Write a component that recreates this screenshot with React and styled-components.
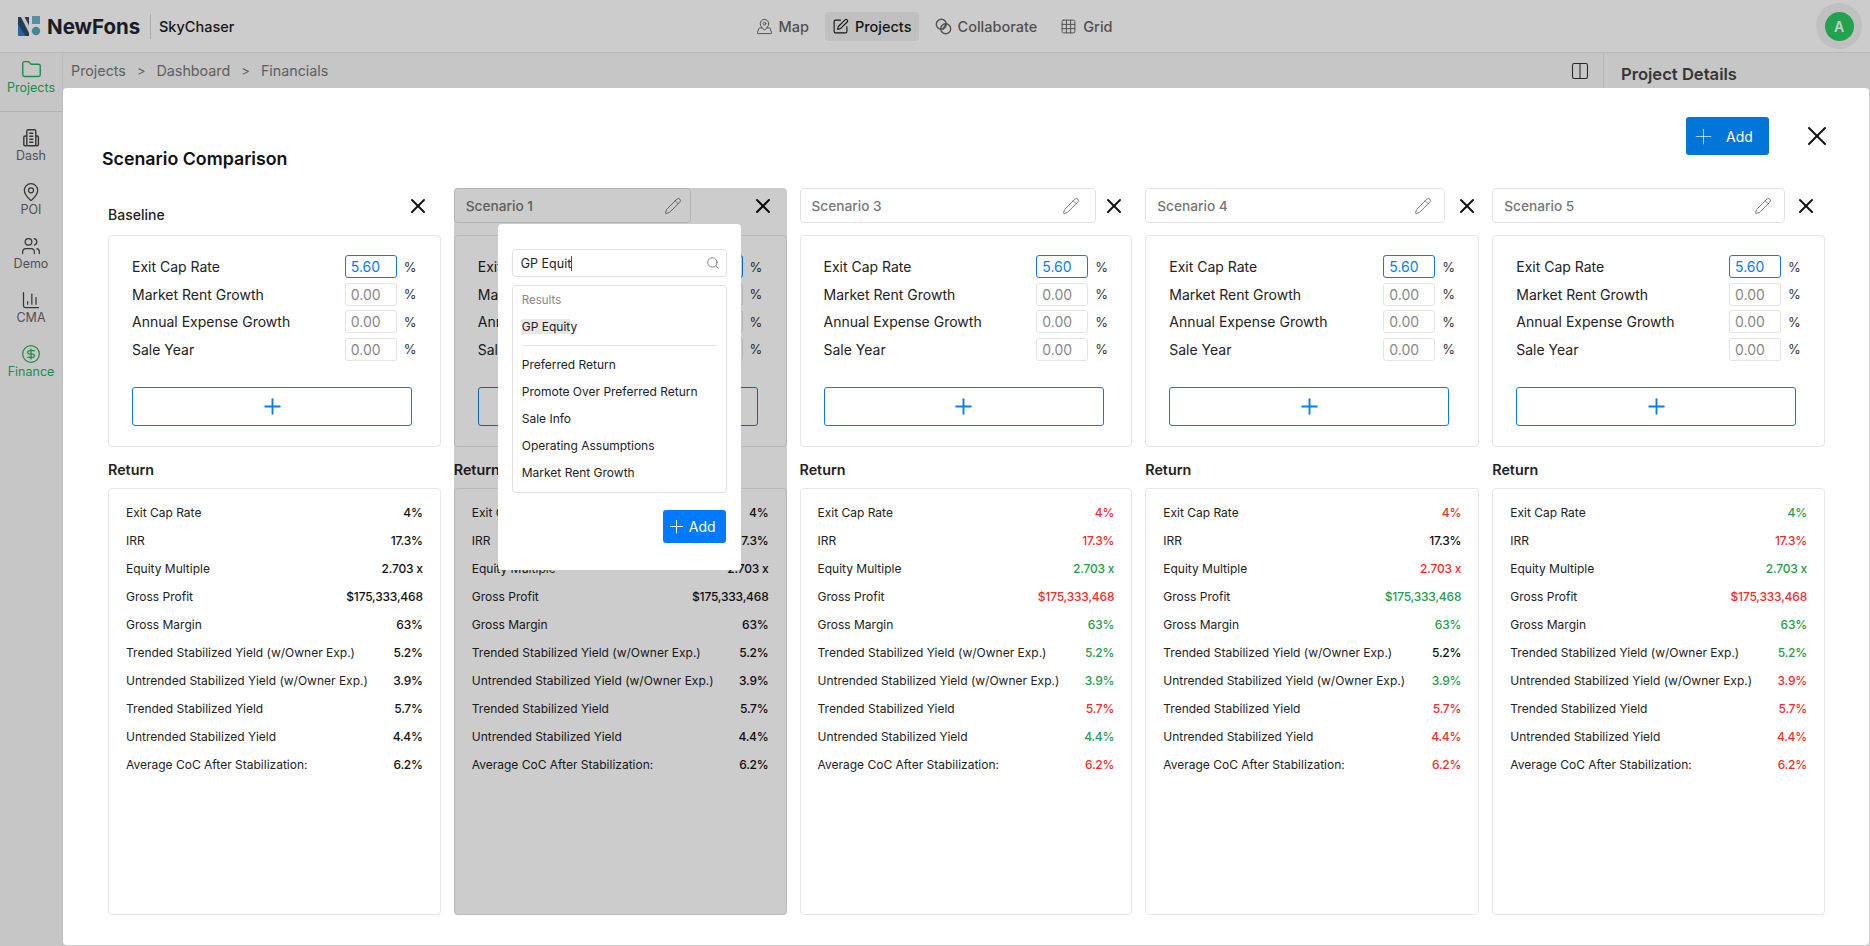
import React from "react";
import styled, { createGlobalStyle } from "styled-components";
import {
  Folder,
  MapPin,
  Users,
  ChartColumn,
  CircleDollarSign,
  MapPinned,
  SquarePen,
  Grid3x3,
  Columns2,
  Pencil,
  Plus,
  Search,
  X,
} from "lucide-react";

const GlobalStyle = createGlobalStyle`
  * { box-sizing: border-box; }
  html, body { margin: 0; height: 100%; overflow: hidden; }
  body { font-family: "Inter", "Liberation Sans", sans-serif; background: #fff; color: #111; }
`;

const RED = "#f72b2b";
const GREEN = "#1f9d4d";
const BLACK = "#111";

const METRICS = [
  ["Exit Cap Rate", "4%"],
  ["IRR", "17.3%"],
  ["Equity Multiple", "2.703 x"],
  ["Gross Profit", "$175,333,468"],
  ["Gross Margin", "63%"],
  ["Trended Stabilized Yield (w/Owner Exp.)", "5.2%"],
  ["Untrended Stabilized Yield (w/Owner Exp.)", "3.9%"],
  ["Trended Stabilized Yield", "5.7%"],
  ["Untrended Stabilized Yield", "4.4%"],
  ["Average CoC After Stabilization:", "6.2%"],
];

const FIELDS = ["Exit Cap Rate", "Market Rent Growth", "Annual Expense Growth", "Sale Year"];

// r = red, g = green, k = black, one letter per metric row
const SCENARIOS = [
  { name: "Baseline", tones: "kkkkkkkkkk", closeGap: 0 },
  { name: "Scenario 1", tones: "kkkkkkkkkk", fieldWidth: 237, closeGap: 60, penRight: 8, picking: true },
  { name: "Scenario 3", tones: "rrgrgggrgr", fieldWidth: 296, closeGap: 6.5, penRight: 15 },
  { name: "Scenario 4", tones: "rkrggkgrrr", fieldWidth: 300, closeGap: 10, penRight: 12 },
  { name: "Scenario 5", tones: "grgrggrrrr", fieldWidth: 293, closeGap: 9, penRight: 12 },
];

const toneColor = { r: RED, g: GREEN, k: BLACK };

const BuildingIcon = ({ size = 20 }) => (
  <svg width={size} height={size} viewBox="0 0 20 20" fill="none" stroke="currentColor" strokeWidth="1.4">
    <rect x="5.8" y="1.8" width="9" height="16" rx="1.4" />
    <path d="M5.8 8H4.2A1.4 1.4 0 0 0 2.8 9.4v7A1.4 1.4 0 0 0 4.2 17.8h1.6M14.8 8h1.2a1.4 1.4 0 0 1 1.4 1.4v7a1.4 1.4 0 0 1-1.4 1.4h-1.2" />
    <path d="M8.3 5.2h4M8.3 8.2h4M8.3 11.2h4M8.3 14.2h4" />
  </svg>
);

const SIDE_ITEMS = [
  { label: "Dash", icon: BuildingIcon },
  { label: "POI", icon: MapPin },
  { label: "Demo", icon: Users },
  { label: "CMA", icon: ChartColumn },
  { label: "Finance", icon: CircleDollarSign, active: true },
];

const CollabIcon = () => (
  <svg width="17" height="17" viewBox="0 0 17 17" fill="none" stroke="currentColor" strokeWidth="1.4">
    <circle cx="6.3" cy="6.3" r="5" />
    <circle cx="10.7" cy="10.7" r="5" />
    <path d="M7.5 11.5l4-6" />
  </svg>
);

const Logo = () => (
  <svg width="23" height="21" viewBox="0 0 23 21">
    <rect x="0" y="1" width="11" height="19" fill="#2b4f66" />
    <path d="M0 8l7.5 12H0z" fill="#2f7fd0" />
    <path d="M3 1h3.6L11 9.5V17z" fill="#f4f4f4" />
    <rect x="14" y="0" width="8" height="8" fill="#6cb3c6" />
    <circle cx="18" cy="15" r="4.2" fill="#5aa5bd" />
  </svg>
);

export default function App() {
  return (
    <>
      <GlobalStyle />
      <Page>
        <Header>
          <Brand>
            <Logo />
            <BrandName>NewFons</BrandName>
            <BrandDivider />
            <ProductName>SkyChaser</ProductName>
          </Brand>
          <Nav>
            <NavItem><MapPinned size={17} strokeWidth={1.4} />Map</NavItem>
            <NavItem $active><SquarePen size={17} strokeWidth={1.6} />Projects</NavItem>
            <NavItem><CollabIcon />Collaborate</NavItem>
            <NavItem><Grid3x3 size={17} strokeWidth={1.4} />Grid</NavItem>
          </Nav>
          <AvatarRing><Avatar>A</Avatar></AvatarRing>
        </Header>
        <Body>
          <Sidebar>
            <SideTop>
              <SideItem $active><Folder size={21} strokeWidth={1.6} />Projects</SideItem>
            </SideTop>
            {SIDE_ITEMS.map(({ label, icon: Icon, active }) => (
              <SideItem key={label} $active={active}>
                <Icon size={20} strokeWidth={1.5} />
                {label}
              </SideItem>
            ))}
          </Sidebar>
          <Main>
            <CrumbBar>
              <Crumbs>
                <span>Projects</span><Sep>&gt;</Sep>
                <span>Dashboard</span><Sep>&gt;</Sep>
                <span>Financials</span>
              </Crumbs>
              <PanelToggle><Columns2 size={20} strokeWidth={1.3} /></PanelToggle>
              <DetailsTab>Project Details</DetailsTab>
            </CrumbBar>
          </Main>
        </Body>
        <Backdrop />
        <Modal>
          <ModalTop>
            <ModalTitle>Scenario Comparison</ModalTitle>
            <AddButton><Plus size={25} strokeWidth={1} color="rgba(255,255,255,0.65)" />Add</AddButton>
            <ModalClose><X size={32} strokeWidth={1.5} /></ModalClose>
          </ModalTop>
          <Columns>
            {SCENARIOS.map((s) => (
              <Column key={s.name} $dim={s.picking}>
                <ColumnHead>
                  {s.fieldWidth ? (
                    <NameField $width={s.fieldWidth} $penRight={s.penRight}>
                      {s.name}
                      <Pencil size={18} strokeWidth={1} color="#555" />
                    </NameField>
                  ) : (
                    <BaseName>{s.name}</BaseName>
                  )}
                  <CloseIcon $gap={s.closeGap}><X size={24} strokeWidth={2} /></CloseIcon>
                </ColumnHead>
                <FormCard>
                  {FIELDS.map((f, i) => (
                    <FieldRow key={f}>
                      <FieldLabel>{f}</FieldLabel>
                      <ValueBox $focus={i === 0}>{i === 0 ? "5.60" : "0.00"}</ValueBox>
                      <Unit>%</Unit>
                    </FieldRow>
                  ))}
                  <WideAdd><Plus size={25} strokeWidth={1.8} /></WideAdd>
                </FormCard>
                <SectionLabel>Return</SectionLabel>
                <ReturnCard>
                  {METRICS.map(([label, value], i) => (
                    <MetricRow key={label}>
                      <span>{label}</span>
                      <MetricValue $color={toneColor[s.tones[i]]}>{value}</MetricValue>
                    </MetricRow>
                  ))}
                </ReturnCard>
                {s.picking && (
                  <Picker>
                    <SearchBox>
                      <SearchText>GP Equit<Caret /></SearchText>
                      <Search size={14} strokeWidth={1.2} color="#555" />
                    </SearchBox>
                    <ResultList>
                      <ResultsHead>Results</ResultsHead>
                      <ResultRow><span><Hit>GP Equit</Hit>y</span></ResultRow>
                      <ResultDivider />
                      <ResultRow>Preferred Return</ResultRow>
                      <ResultRow>Promote Over Preferred Return</ResultRow>
                      <ResultRow>Sale Info</ResultRow>
                      <ResultRow>Operating Assumptions</ResultRow>
                      <ResultRow>Market Rent Growth</ResultRow>
                    </ResultList>
                    <PickerFoot>
                      <PickerAdd><Plus size={21} strokeWidth={1.2} />Add</PickerAdd>
                    </PickerFoot>
                  </Picker>
                )}
              </Column>
            ))}
          </Columns>
        </Modal>
      </Page>
    </>
  );
}

const Page = styled.div`
  position: relative;
  width: 1870px;
  height: 946px;
  overflow: hidden;
`;

const Header = styled.header`
  height: 53px;
  display: grid;
  grid-template-columns: 1fr auto 1fr;
  align-items: center;
  padding: 0 8px 0 18px;
  background: #fff;
  border-bottom: 1px solid #e8e8e8;
`;

const Brand = styled.div`
  display: flex;
  align-items: center;
`;

const BrandName = styled.div`
  margin-left: 6px;
  font-size: 20.5px;
  font-weight: 700;
  color: #1d2630;
  width: 97px;
`;

const BrandDivider = styled.div`
  width: 1px;
  height: 25px;
  margin: 0 8px 0 6px;
  background: #d8d8d8;
`;

const ProductName = styled.div`
  font-size: 14.5px;
  color: #1d1d1d;
  font-weight: 500;
`;

const Nav = styled.nav`
  display: flex;
  align-items: center;
  gap: 9px;
  margin-left: -12px;
`;

const NavItem = styled.div`
  display: flex;
  align-items: center;
  gap: 6px;
  height: 29px;
  padding: 0 7px;
  border-radius: 4px;
  font-size: 14.5px;
  font-weight: 500;
  color: ${(p) => (p.$active ? "#1b1b1b" : "#666")};
  background: ${(p) => (p.$active ? "#f0f0f0" : "transparent")};
`;

const AvatarRing = styled.div`
  justify-self: end;
  width: 46px;
  height: 46px;
  border-radius: 50%;
  background: #f0f0f0;
  display: flex;
  align-items: center;
  justify-content: center;
`;

const Avatar = styled.div`
  width: 29px;
  height: 29px;
  border-radius: 50%;
  background: #2bcb62;
  color: #fff;
  font-size: 14px;
  font-weight: 600;
  display: flex;
  align-items: center;
  justify-content: center;
`;

const Body = styled.div`
  display: flex;
  height: 893px;
`;

const Sidebar = styled.aside`
  width: 63px;
  flex: none;
  background: #f8f8f8;
  border-right: 1px solid #ececec;
`;

const SideTop = styled.div`
  height: 59px;
  padding-top: 6px;
  margin-bottom: 16px;
  border-bottom: 1px solid #e2e2e2;
`;

const SideItem = styled.div`
  height: 54px;
  display: flex;
  flex-direction: column;
  align-items: center;
  gap: 0;
  font-size: 12.5px;
  color: ${(p) => (p.$active ? "#23b358" : "#666")};

  svg {
    color: ${(p) => (p.$active ? "#23b358" : "#444")};
  }
`;

const Main = styled.main`
  flex: 1;
`;

const CrumbBar = styled.div`
  height: 35px;
  display: flex;
  align-items: center;
  padding-left: 8px;
  background: #f8f8f8;
`;

const Crumbs = styled.div`
  flex: 1;
  display: flex;
  align-items: center;
  font-size: 14.3px;
  color: #777;
`;

const Sep = styled.span`
  margin: 0 11px;
  font-size: 13px;
`;

const PanelToggle = styled.div`
  width: 33px;
  height: 35px;
  display: flex;
  align-items: center;
  color: #333;
`;

const DetailsTab = styled.div`
  width: 267px;
  height: 35px;
  padding: 11px 0 0 17px;
  border-left: 1px solid #e6e6e6;
  font-size: 16.6px;
  font-weight: 600;
  color: #444;
  background: #f8f8f8;
`;

const Backdrop = styled.div`
  position: absolute;
  inset: 0;
  background: rgba(0, 0, 0, 0.2);
`;

const Modal = styled.section`
  position: absolute;
  left: 63px;
  top: 88px;
  width: 1806px;
  height: 857px;
  padding: 29px 44px 0 45px;
  background: #fff;
  border-radius: 4px;
`;

const ModalTop = styled.div`
  height: 71px;
  display: flex;
  align-items: flex-start;
`;

const ModalTitle = styled.h2`
  flex: 1;
  margin: 32px 0 0 -6px;
  font-size: 17.8px;
  line-height: 20px;
  font-weight: 600;
  color: #111;
`;

const AddButton = styled.button`
  width: 83px;
  height: 38px;
  display: flex;
  align-items: center;
  gap: 10px;
  padding: 0 0 0 5px;
  border: none;
  border-radius: 3px;
  background: #0275d8;
  color: #fff;
  font: 400 14px "Inter", sans-serif;
`;

const ModalClose = styled.div`
  margin: 3px -8px 0 32px;
  height: 32px;
  color: #111;
`;

const Columns = styled.div`
  display: grid;
  grid-template-columns: repeat(5, 1fr);
  gap: 13px;
`;

const Column = styled.div`
  position: relative;
  height: 727px;

  ${(p) =>
    p.$dim &&
    `
    &::after {
      content: "";
      position: absolute;
      inset: 0;
      border-radius: 4px;
      background: rgba(0, 0, 0, 0.2);
    }
  `}
`;

const ColumnHead = styled.div`
  height: 35px;
  display: flex;
  align-items: center;
`;

const NameField = styled.div`
  width: ${(p) => p.$width}px;
  height: 35px;
  display: flex;
  align-items: center;
  justify-content: space-between;
  padding: 0 ${(p) => p.$penRight}px 0 11px;
  border: 1px solid #e2e2e2;
  border-radius: 4px;
  font-size: 13.7px;
  font-weight: 500;
  color: #777;
`;

const BaseName = styled.div`
  width: 298px;
  padding-top: 17px;
  font-size: 14px;
  font-weight: 500;
  color: #222;
`;

const CloseIcon = styled.div`
  margin-left: ${(p) => p.$gap}px;
  height: 24px;
  color: #111;
`;

const FormCard = styled.div`
  height: 212px;
  margin-top: 12px;
  padding: 17px 24px 0 23px;
  border: 1px solid #e6e6e6;
  border-radius: 4px;
`;

const FieldRow = styled.div`
  height: 27.5px;
  display: flex;
  align-items: center;
`;

const FieldLabel = styled.div`
  flex: 1;
  font-size: 14px;
  color: #222;
`;

const ValueBox = styled.div`
  width: 52px;
  height: 23px;
  padding-left: 5px;
  line-height: 21px;
  font-size: 14px;
  border-radius: 3px;
  border: 1px solid ${(p) => (p.$focus ? "#0b7bf0" : "#e4e4e4")};
  color: ${(p) => (p.$focus ? "#0b7bf0" : "#888")};
`;

const Unit = styled.span`
  width: 19px;
  padding-left: 7px;
  font-size: 13px;
  color: #333;
`;

const WideAdd = styled.button`
  display: flex;
  align-items: center;
  justify-content: center;
  width: 280px;
  height: 39px;
  margin-top: 24px;
  background: #fff;
  border: 1px solid #0b7bf0;
  border-radius: 3px;
  color: #0b7bf0;
`;

const SectionLabel = styled.div`
  height: 41px;
  padding-top: 14px;
  font-size: 14.3px;
  font-weight: 600;
  color: #222;
`;

const ReturnCard = styled.div`
  height: 427px;
  padding: 9px 17px 0 17px;
  border: 1px solid #e6e6e6;
  border-radius: 4px;
`;

const MetricRow = styled.div`
  height: 28px;
  display: flex;
  align-items: center;
  justify-content: space-between;
  font-size: 12px;
  color: #222;
`;

const MetricValue = styled.span`
  font-weight: 500;
  letter-spacing: -0.2px;
  color: ${(p) => p.$color};
`;

const Picker = styled.div`
  position: absolute;
  z-index: 2;
  left: 44px;
  top: 36px;
  width: 243px;
  height: 346px;
  padding: 25px 14px 0;
  background: #fff;
  border-radius: 4px;
`;

const SearchBox = styled.div`
  height: 28px;
  display: flex;
  align-items: center;
  justify-content: space-between;
  padding: 0 6px 0 8px;
  border: 1px solid #e2e2e2;
  border-radius: 4px;
`;

const SearchText = styled.span`
  display: flex;
  align-items: center;
  font-size: 12.5px;
  color: #222;
`;

const Caret = styled.span`
  width: 1px;
  height: 15px;
  background: #555;
`;

const ResultList = styled.div`
  height: 208px;
  margin-top: 8px;
  padding: 6px 9px 0;
  border: 1px solid #e2e2e2;
  border-radius: 4px;
`;

const ResultsHead = styled.div`
  height: 21px;
  line-height: 17px;
  font-size: 11.5px;
  color: #888;
`;

const ResultRow = styled.div`
  height: 27px;
  display: flex;
  align-items: center;
  font-size: 12px;
  color: #222;
`;

const Hit = styled.span`
  background: #e8e8e8;
`;

const ResultDivider = styled.div`
  height: 1px;
  margin: 5px 0 5px;
  background: #e4e4e4;
`;

const PickerFoot = styled.div`
  display: flex;
  justify-content: flex-end;
  margin: 17px 1px 0 0;
`;

const PickerAdd = styled.button`
  width: 63px;
  height: 33px;
  display: flex;
  align-items: center;
  gap: 2px;
  padding: 0 0 0 3px;
  border: none;
  border-radius: 3px;
  background: #007bff;
  color: #fff;
  font: 400 14px "Inter", sans-serif;
`;
